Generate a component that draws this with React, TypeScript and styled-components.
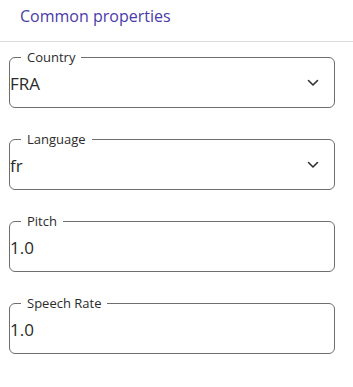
import React from 'react'
import styled, { createGlobalStyle } from 'styled-components'

const GlobalStyle = createGlobalStyle`
    body {
        margin: 0;
        background: #ffffff;
        font-family: "Open Sans", Lato, sans-serif;
    }
`

const Panel = styled.div`
    width: 353px;
    display: flex;
    flex-direction: column;
`

const Header = styled.div`
    height: 42px;
    padding-left: 20px;
    padding-bottom: 10px;
    display: flex;
    align-items: center;
    border-bottom: 1px solid #dcdcdc;
    color: #4a3aa8;
    font-size: 16px;
    box-sizing: border-box;
`

const Fields = styled.div`
    display: flex;
    flex-direction: column;
    gap: 23px;
    padding: 7px 18px 0 9px;
`

const Box = styled.fieldset`
    margin: 0;
    padding: 0 0 6px 0;
    border: 1px solid #6e6e6e;
    border-radius: 6px;
    min-width: 0;
`

const Label = styled.legend`
    margin-left: 11px;
    padding: 0 6px;
    font-size: 13px;
    line-height: 16px;
    color: #2b2b2b;
`

const Row = styled.div`
    height: 36px;
    display: flex;
    align-items: center;
    justify-content: space-between;
    padding: 0 15px 0 0;
`

const Value = styled.span`
    font-size: 17px;
    color: #2a2a2a;
`

const Chevron = () => (
    <svg width="12" height="8" viewBox="0 0 12 8">
        <path d="M1.5 1.5 L6 6 L10.5 1.5" fill="none" stroke="#333" strokeWidth="1.6" strokeLinecap="round" strokeLinejoin="round" />
    </svg>
)

type FieldProps = { label: string; value: string; select?: boolean }

function Field({ label, value, select }: FieldProps) {
    return (
        <Box>
            <Label>{label}</Label>
            <Row>
                <Value>{value}</Value>
                {select && <Chevron />}
            </Row>
        </Box>
    )
}

function App() {
    return (
        <Panel>
            <GlobalStyle />
            <Header>Common properties</Header>
            <Fields>
                <Field label="Country" value="FRA" select />
                <Field label="Language" value="fr" select />
                <Field label="Pitch" value="1.0" />
                <Field label="Speech Rate" value="1.0" />
            </Fields>
        </Panel>
    )
}

export default App
